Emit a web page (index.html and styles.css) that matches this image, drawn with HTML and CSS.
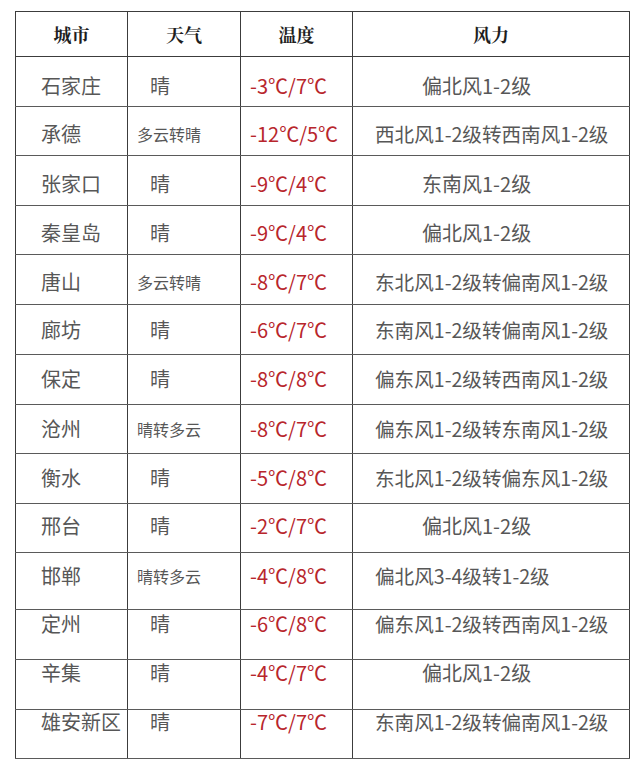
FILE: index.html
```html
<!DOCTYPE html>
<html lang="zh-CN">
<head>
<meta charset="utf-8">
<title>天气</title>
<link rel="stylesheet" href="styles.css">
</head>
<body>
<table class="wx">
  <colgroup>
    <col class="c1"><col class="c2"><col class="c3"><col class="c4">
  </colgroup>
  <thead>
    <tr class="head"><th>城市</th><th>天气</th><th>温度</th><th>风力</th></tr>
  </thead>
  <tbody>
    <tr class="h50 o17"><td class="city">石家庄</td><td class="sky">晴</td><td class="temp">-3℃/7℃</td><td class="wind short">偏北风1-2级</td></tr>
    <tr class="h49 o15"><td class="city">承德</td><td class="sky multi">多云转晴</td><td class="temp">-12℃/5℃</td><td class="wind long">西北风1-2级转西南风1-2级</td></tr>
    <tr class="h50 o16"><td class="city">张家口</td><td class="sky">晴</td><td class="temp">-9℃/4℃</td><td class="wind short">东南风1-2级</td></tr>
    <tr class="h49 o15"><td class="city">秦皇岛</td><td class="sky">晴</td><td class="temp">-9℃/4℃</td><td class="wind short">偏北风1-2级</td></tr>
    <tr class="h50 o15"><td class="city">唐山</td><td class="sky multi">多云转晴</td><td class="temp">-8℃/7℃</td><td class="wind long">东北风1-2级转偏南风1-2级</td></tr>
    <tr class="h50 o13"><td class="city">廊坊</td><td class="sky">晴</td><td class="temp">-6℃/7℃</td><td class="wind long">东南风1-2级转偏南风1-2级</td></tr>
    <tr class="h50 o12"><td class="city">保定</td><td class="sky">晴</td><td class="temp">-8℃/8℃</td><td class="wind long">偏东风1-2级转西南风1-2级</td></tr>
    <tr class="h49 o12"><td class="city">沧州</td><td class="sky multi">晴转多云</td><td class="temp">-8℃/7℃</td><td class="wind long">偏东风1-2级转东南风1-2级</td></tr>
    <tr class="h50 o12"><td class="city">衡水</td><td class="sky">晴</td><td class="temp">-5℃/8℃</td><td class="wind long">东北风1-2级转偏东风1-2级</td></tr>
    <tr class="h49 o10"><td class="city">邢台</td><td class="sky">晴</td><td class="temp">-2℃/7℃</td><td class="wind short">偏北风1-2级</td></tr>
    <tr class="h57 o11"><td class="city">邯郸</td><td class="sky multi">晴转多云</td><td class="temp">-4℃/8℃</td><td class="wind long">偏北风3-4级转1-2级</td></tr>
    <tr class="h50 o2"><td class="city">定州</td><td class="sky">晴</td><td class="temp">-6℃/8℃</td><td class="wind long">偏东风1-2级转西南风1-2级</td></tr>
    <tr class="h50 o1"><td class="city">辛集</td><td class="sky">晴</td><td class="temp">-4℃/7℃</td><td class="wind short">偏北风1-2级</td></tr>
    <tr class="h49 o0"><td class="city">雄安新区</td><td class="sky">晴</td><td class="temp">-7℃/7℃</td><td class="wind long">东南风1-2级转偏南风1-2级</td></tr>
  </tbody>
</table>
</body>
</html>
```
FILE: styles.css
```css
html, body {
  margin: 0;
  padding: 0;
  background: #ffffff;
}
body {
  padding: 11px 0 0 15px;
  font-family: "Noto Sans CJK SC", "Noto Sans", sans-serif;
  color: #575757;
}
.wx {
  border-collapse: collapse;
  table-layout: fixed;
  width: 614px;
}
.c1 { width: 112px; }
.c2 { width: 113px; }
.c3 { width: 112px; }
.c4 { width: 277px; }
.wx th, .wx td {
  border: 1px solid #3c3c3c;
  padding: 0;
  vertical-align: top;
  white-space: nowrap;
}
.wx tbody td {
  border-top-color: #5a5a5a;
  border-bottom-color: #5a5a5a;
  font-size: 20px;
  line-height: 24px;
}
.head { height: 45px; }
.head th {
  vertical-align: middle;
  text-align: center;
  font-family: "Noto Serif CJK SC", "Noto Sans CJK SC", serif;
  font-size: 18px;
  font-weight: 700;
  color: #1e1e1e;
  line-height: 24px;
}
.h49 { height: 49px; }
.h50 { height: 50px; }
.h57 { height: 57px; }
.wx .o0 td { padding-top: 0px; }
.wx .o1 td { padding-top: 1px; }
.wx .o2 td { padding-top: 2px; }
.wx .o10 td { padding-top: 10px; }
.wx .o11 td { padding-top: 11px; }
.wx .o12 td { padding-top: 12px; }
.wx .o13 td { padding-top: 13px; }
.wx .o15 td { padding-top: 15px; }
.wx .o16 td { padding-top: 16px; }
.wx .o17 td { padding-top: 17px; }
.wx td.city { padding-left: 25px; }
.wx td.sky { padding-left: 22px; }
.wx td.sky.multi {
  padding-left: 9px;
  font-size: 16px;
}
.wx td.temp {
  padding-left: 9px;
  color: #b8262c;
}
.wx td.wind.short { padding-left: 69px; }
.wx td.wind.long {
  padding-left: 22px;
  font-size: 19.6px;
}
```
